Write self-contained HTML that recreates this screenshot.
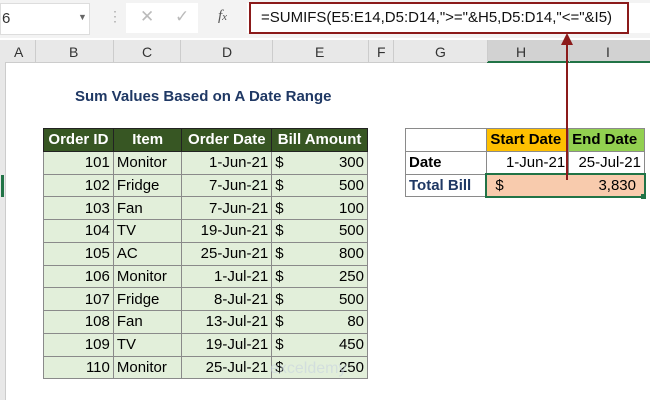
<html><head><style>
body{margin:0;width:650px;height:400px;overflow:hidden;background:#fff;font-family:"Liberation Sans",Calibri,sans-serif;position:relative}
.a{position:absolute}
table{border-collapse:collapse;position:absolute;font-size:15px}
tr{height:22.75px}
td{border:1px solid #8a8a8a;padding:0 3px;white-space:nowrap}
.g td{background:#e2efda}
.h td{background:#375623;color:#fff;font-weight:bold;text-align:center;border-color:#222}
.r{text-align:right}
</style></head><body>
<div class="a" style="left:0;top:0;width:650px;height:38px;background:#f3f3f3"></div>
<div class="a" style="left:0;top:3px;width:88px;height:30px;background:#fff;border:1px solid #ddd"></div>
<div class="a" style="left:2px;top:10px;font-size:15px;color:#333">6</div>
<div class="a" style="left:78px;top:12px;font-size:9px;color:#666">▼</div>
<div class="a" style="left:108px;top:8px;font-size:14px;color:#aaa">⋮</div>
<div class="a" style="left:126px;top:3px;width:72px;height:30px;background:#fff"></div>
<div class="a" style="left:140px;top:7px;font-size:17px;color:#bbb">✕</div>
<div class="a" style="left:175px;top:7px;font-size:17px;color:#bbb">✓</div>
<div class="a" style="left:218px;top:8px;font-size:15px;font-style:italic;font-family:'Liberation Serif',serif;color:#555">f<span style="font-size:11px">x</span></div>
<div class="a" style="left:247px;top:3px;width:403px;height:30px;background:#fff"></div>
<div class="a" style="left:249px;top:2px;width:376px;height:28px;border:2px solid #8b1a1a"></div>
<div class="a" style="left:261px;top:9px;font-size:15px;color:#111">=SUMIFS(E5:E14,D5:D14,"&gt;="&amp;H5,D5:D14,"&lt;="&amp;I5)</div>
<div class="a" style="left:0;top:40px;width:650px;height:22px;background:#e8e8e8;border-bottom:1px solid #ccc"></div>
<div class="a" style="left:487px;top:40px;width:163px;height:21px;background:#d2d2d2;border-bottom:2px solid #217346"></div>
<div class="a" style="left:0;top:62px;width:5px;height:338px;background:#e8e8e8;border-right:1px solid #ccc"></div>
<div class="a" style="left:1px;top:175px;width:3px;height:22px;background:#217346"></div>
<div style="position:absolute;top:44px;font-size:14px;color:#333;left:0;width:650px">
<span class="a" style="left:14px">A</span><span class="a" style="left:69px">B</span><span class="a" style="left:142px">C</span><span class="a" style="left:222px">D</span><span class="a" style="left:315px">E</span><span class="a" style="left:377px">F</span><span class="a" style="left:435px">G</span><span class="a" style="left:516px">H</span><span class="a" style="left:606px">I</span></div>
<div class="a" style="left:35px;top:40px;width:1px;height:22px;background:#ccc"></div>
<div class="a" style="left:113px;top:40px;width:1px;height:22px;background:#ccc"></div>
<div class="a" style="left:180px;top:40px;width:1px;height:22px;background:#ccc"></div>
<div class="a" style="left:272px;top:40px;width:1px;height:22px;background:#ccc"></div>
<div class="a" style="left:368px;top:40px;width:1px;height:22px;background:#ccc"></div>
<div class="a" style="left:393px;top:40px;width:1px;height:22px;background:#ccc"></div>
<div class="a" style="left:487px;top:40px;width:1px;height:22px;background:#ccc"></div>
<div class="a" style="left:569px;top:40px;width:1px;height:22px;background:#ccc"></div>
<div class="a" style="left:75px;top:88px;font-size:15px;font-weight:bold;color:#1f3864">Sum Values Based on A Date Range</div>
<table style="left:43px;top:128px;width:325px;height:250px">
<colgroup><col style="width:70px"><col style="width:69px"><col style="width:90px"><col style="width:96px"></colgroup>
<tr class="h"><td>Order ID</td><td>Item</td><td>Order Date</td><td>Bill Amount</td></tr>
<tr class="g"><td class="r">101</td><td>Monitor</td><td class="r">1-Jun-21</td><td>$<span style="float:right">300</span></td></tr>
<tr class="g"><td class="r">102</td><td>Fridge</td><td class="r">7-Jun-21</td><td>$<span style="float:right">500</span></td></tr>
<tr class="g"><td class="r">103</td><td>Fan</td><td class="r">7-Jun-21</td><td>$<span style="float:right">100</span></td></tr>
<tr class="g"><td class="r">104</td><td>TV</td><td class="r">19-Jun-21</td><td>$<span style="float:right">500</span></td></tr>
<tr class="g"><td class="r">105</td><td>AC</td><td class="r">25-Jun-21</td><td>$<span style="float:right">800</span></td></tr>
<tr class="g"><td class="r">106</td><td>Monitor</td><td class="r">1-Jul-21</td><td>$<span style="float:right">250</span></td></tr>
<tr class="g"><td class="r">107</td><td>Fridge</td><td class="r">8-Jul-21</td><td>$<span style="float:right">500</span></td></tr>
<tr class="g"><td class="r">108</td><td>Fan</td><td class="r">13-Jul-21</td><td>$<span style="float:right">80</span></td></tr>
<tr class="g"><td class="r">109</td><td>TV</td><td class="r">19-Jul-21</td><td>$<span style="float:right">450</span></td></tr>
<tr class="g"><td class="r">110</td><td>Monitor</td><td class="r">25-Jul-21</td><td>$<span style="float:right">250</span></td></tr>
</table>
<table style="left:405px;top:128px;width:240px;height:69px">
<colgroup><col style="width:82px"><col style="width:82px"><col style="width:76px"></colgroup>
<tr><td></td><td style="background:#ffc000;font-weight:bold">Start Date</td><td style="background:#92d050;font-weight:bold">End Date</td></tr>
<tr><td style="font-weight:bold">Date</td><td class="r">1-Jun-21</td><td class="r">25-Jul-21</td></tr>
<tr><td style="font-weight:bold;color:#1f3864">Total Bill</td><td colspan="2" style="background:#f8cbad;padding:0 8px">$<span style="float:right">3,830</span></td></tr>
</table>
<div class="a" style="left:485px;top:173px;width:157px;height:21px;border:2px solid #217346"></div>
<div class="a" style="left:641px;top:194px;width:5px;height:5px;background:#217346"></div>
<div class="a" style="left:566px;top:44px;width:2px;height:136px;background:#8b1a1a"></div>
<div class="a" style="left:561px;top:33px;width:0;height:0;border-left:6px solid transparent;border-right:6px solid transparent;border-bottom:12px solid #8b1a1a"></div>
<div class="a" style="left:270px;top:360px;font-size:16px;color:#c9d3df;opacity:.6">exceldemy</div>
</body></html>
